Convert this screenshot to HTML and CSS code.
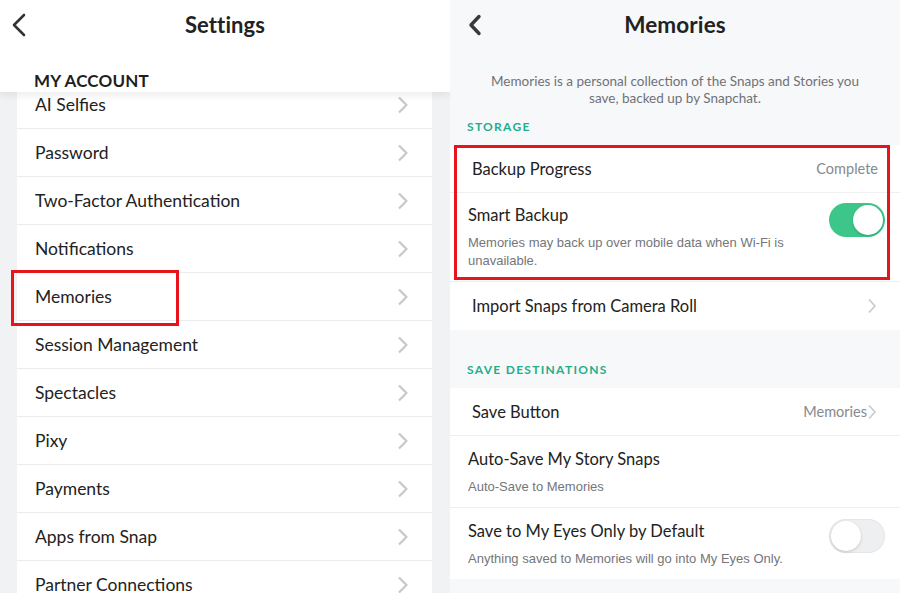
FILE: index.html
```html
<!DOCTYPE html>
<html>
<head>
<meta charset="utf-8">
<link rel="stylesheet" href="styles.css">
</head>
<body>
<div class="screen">
  <section class="panel left">
    <header class="left-header">
      <div class="topbar">
        <span class="back"><svg width="16" height="24" viewBox="0 0 16 24"><path d="M13 2 L3 12 L13 22" fill="none" stroke="#333" stroke-width="2.6" stroke-linecap="round" stroke-linejoin="round"/></svg></span>
        <h1 class="title">Settings</h1>
        <span></span>
      </div>
      <div class="account">MY ACCOUNT</div>
    </header>
    <ul class="list">
      <li class="row">AI Selfies<svg class="chev" width="12" height="18" viewBox="0 0 12 18"><path d="M2 1.5 L9.5 9 L2 16.5" fill="none" stroke="#c7c8ca" stroke-width="2.2" stroke-linejoin="round"/></svg></li>
      <li class="row">Password<svg class="chev" width="12" height="18" viewBox="0 0 12 18"><path d="M2 1.5 L9.5 9 L2 16.5" fill="none" stroke="#c7c8ca" stroke-width="2.2" stroke-linejoin="round"/></svg></li>
      <li class="row">Two-Factor Authentication<svg class="chev" width="12" height="18" viewBox="0 0 12 18"><path d="M2 1.5 L9.5 9 L2 16.5" fill="none" stroke="#c7c8ca" stroke-width="2.2" stroke-linejoin="round"/></svg></li>
      <li class="row">Notifications<svg class="chev" width="12" height="18" viewBox="0 0 12 18"><path d="M2 1.5 L9.5 9 L2 16.5" fill="none" stroke="#c7c8ca" stroke-width="2.2" stroke-linejoin="round"/></svg></li>
      <li class="row marked">Memories<svg class="chev" width="12" height="18" viewBox="0 0 12 18"><path d="M2 1.5 L9.5 9 L2 16.5" fill="none" stroke="#c7c8ca" stroke-width="2.2" stroke-linejoin="round"/></svg></li>
      <li class="row">Session Management<svg class="chev" width="12" height="18" viewBox="0 0 12 18"><path d="M2 1.5 L9.5 9 L2 16.5" fill="none" stroke="#c7c8ca" stroke-width="2.2" stroke-linejoin="round"/></svg></li>
      <li class="row">Spectacles<svg class="chev" width="12" height="18" viewBox="0 0 12 18"><path d="M2 1.5 L9.5 9 L2 16.5" fill="none" stroke="#c7c8ca" stroke-width="2.2" stroke-linejoin="round"/></svg></li>
      <li class="row">Pixy<svg class="chev" width="12" height="18" viewBox="0 0 12 18"><path d="M2 1.5 L9.5 9 L2 16.5" fill="none" stroke="#c7c8ca" stroke-width="2.2" stroke-linejoin="round"/></svg></li>
      <li class="row">Payments<svg class="chev" width="12" height="18" viewBox="0 0 12 18"><path d="M2 1.5 L9.5 9 L2 16.5" fill="none" stroke="#c7c8ca" stroke-width="2.2" stroke-linejoin="round"/></svg></li>
      <li class="row">Apps from Snap<svg class="chev" width="12" height="18" viewBox="0 0 12 18"><path d="M2 1.5 L9.5 9 L2 16.5" fill="none" stroke="#c7c8ca" stroke-width="2.2" stroke-linejoin="round"/></svg></li>
      <li class="row">Partner Connections<svg class="chev" width="12" height="18" viewBox="0 0 12 18"><path d="M2 1.5 L9.5 9 L2 16.5" fill="none" stroke="#c7c8ca" stroke-width="2.2" stroke-linejoin="round"/></svg></li>
    </ul>
  </section>

  <section class="panel right">
    <div class="topbar">
      <span class="back back-r"><svg width="16" height="22" viewBox="0 0 16 22"><path d="M12 2.5 L4 11 L12 19.5" fill="none" stroke="#3a3a3a" stroke-width="3.4" stroke-linecap="round" stroke-linejoin="round"/></svg></span>
      <h1 class="title">Memories</h1>
      <span></span>
    </div>
    <p class="desc">Memories is a personal collection of the Snaps and Stories you save, backed up by Snapchat.</p>
    <div class="label label-storage">STORAGE</div>
    <div class="group">
      <div class="highlight">
        <div class="srow">
          <span class="stitle">Backup Progress</span>
          <span class="value">Complete</span>
        </div>
        <div class="srow tall">
          <div class="stext">
            <div class="stitle">Smart Backup</div>
            <div class="sub">Memories may back up over mobile data when Wi-Fi is unavailable.</div>
          </div>
          <span class="toggle on"><span class="knob"></span></span>
        </div>
      </div>
      <div class="srow last">
        <span class="stitle">Import Snaps from Camera Roll</span>
        <svg class="schev" width="10" height="16" viewBox="0 0 10 16"><path d="M2 1.5 L8 8 L2 14.5" fill="none" stroke="#c9cacc" stroke-width="1.7" stroke-linejoin="round"/></svg>
      </div>
    </div>
    <div class="label label-dest">SAVE DESTINATIONS</div>
    <div class="group">
      <div class="srow">
        <span class="stitle">Save Button</span>
        <span class="value">Memories<svg class="schev tight" width="10" height="16" viewBox="0 0 10 16"><path d="M2 1.5 L8 8 L2 14.5" fill="none" stroke="#c9cacc" stroke-width="1.7" stroke-linejoin="round"/></svg></span>
      </div>
      <div class="srow tall dest">
        <div class="stext">
          <div class="stitle">Auto-Save My Story Snaps</div>
          <div class="sub">Auto-Save to Memories</div>
        </div>
      </div>
      <div class="srow tall dest last">
        <div class="stext">
          <div class="stitle">Save to My Eyes Only by Default</div>
          <div class="sub">Anything saved to Memories will go into My Eyes Only.</div>
        </div>
        <span class="toggle off"><span class="knob"></span></span>
      </div>
    </div>
  </section>
</div>
</body>
</html>
```

FILE: styles.css
```css
* { box-sizing: border-box; }
html, body { margin: 0; padding: 0; }
body {
  width: 900px;
  height: 593px;
  overflow: hidden;
  font-family: Lato, "Open Sans", sans-serif;
  color: #1f1f21;
}
.screen { display: flex; width: 900px; height: 593px; }
.panel { width: 450px; height: 593px; overflow: hidden; }

/* LEFT */
.left { background: #f1f2f4; display: flex; flex-direction: column; }
.left-header {
  background: #fff;
  height: 92px;
  position: relative;
  z-index: 2;
  box-shadow: 0 3px 8px rgba(0,0,0,0.08);
  flex: none;
}
.topbar {
  height: 48px;
  display: grid;
  grid-template-columns: 60px 1fr 60px;
  align-items: center;
}
.back { display: flex; align-items: center; padding-left: 11px; padding-top: 1px; }
.back-r { padding-left: 17px; }
.title {
  margin: 0;
  text-align: center;
  font-size: 22px;
  font-weight: 700;
  color: #222;
  letter-spacing: 0.1px;
}
.account {
  padding-left: 34px;
  margin-top: 23px;
  font-size: 17px;
  font-weight: 700;
  line-height: 20px;
  letter-spacing: 0.2px;
  color: #1e1e1e;
}
.list {
  list-style: none;
  margin: -11px 18px 0 17px;
  padding: 0;
  background: #fff;
}
.row {
  height: 48px;
  border-bottom: 1px solid #ececee;
  display: flex;
  align-items: center;
  justify-content: space-between;
  padding: 0 23px 0 18px;
  font-size: 17.5px;
  color: #222;
  position: relative;
}
.chev { flex: none; }
.marked::after {
  content: "";
  position: absolute;
  left: -6px;
  top: -3px;
  width: 162px;
  height: 50px;
  border: 3px solid #e8141b;
}

/* RIGHT */
.right { background: #f7f8fa; }
.right .title { font-size: 22.5px; }
.desc {
  margin: 25px 0 0;
  padding: 0 30px;
  text-align: center;
  font-size: 13.5px;
  line-height: 17px;
  color: #6f7277;
}
.label {
  display: flex;
  align-items: flex-end;
  padding-left: 17px;
  font-size: 12px;
  font-weight: 700;
  letter-spacing: 1.3px;
  line-height: 16px;
  color: #1fae8c;
}
.label-storage { height: 38px; padding-bottom: 10px; }
.label-dest { height: 58px; padding-bottom: 10px; }
.group { background: #fff; }
.highlight { position: relative; }
.highlight::after {
  content: "";
  position: absolute;
  left: 4px;
  right: 10px;
  top: 0;
  bottom: 2px;
  border: 3px solid #e8141b;
  pointer-events: none;
}
.srow {
  height: 48px;
  border-bottom: 1px solid #efeff1;
  display: flex;
  align-items: center;
  justify-content: space-between;
  padding: 0 22px 0 22px;
}
.srow.last { border-bottom: none; }
.srow.tall {
  height: auto;
  align-items: flex-start;
  padding: 12px 15px 11px 18px;
}
.srow.tall.dest { padding-top: 13px; padding-bottom: 11px; }
.stitle { font-size: 16.5px; line-height: 20px; color: #222; }
.sub {
  margin-top: 9px;
  font-family: "Liberation Sans", Arial, sans-serif;
  font-size: 13px;
  line-height: 18px;
  color: #74767a;
  max-width: 330px;
}
.value {
  font-size: 14.5px;
  color: #86898d;
  display: flex;
  align-items: center;
}
.schev { flex: none; margin-right: 1px; }
.schev.tight { margin-left: 0; }
.toggle {
  flex: none;
  width: 56px;
  height: 34px;
  border-radius: 17px;
  margin-top: -2px;
  position: relative;
  display: flex;
  align-items: center;
  padding: 2px;
}
.srow.tall.dest .toggle { margin-top: -2px; }
.toggle.on { background: #3cc68a; justify-content: flex-end; }
.toggle.off { background: #eeeff0; justify-content: flex-start; box-shadow: inset 0 0 0 1px #e6e6e8; }
.knob {
  width: 30px;
  height: 30px;
  border-radius: 50%;
  background: #fff;
  box-shadow: 0 1px 3px rgba(0,0,0,0.18);
}
```
